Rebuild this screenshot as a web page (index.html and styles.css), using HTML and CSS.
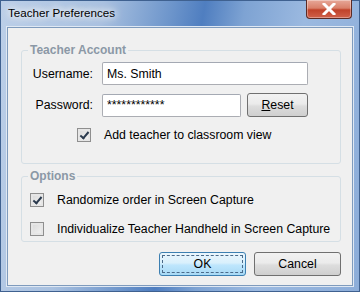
FILE: index.html
```html
<!DOCTYPE html>
<html lang="en">
<head>
  <meta charset="UTF-8">
  <title>Teacher Preferences</title>
  <link rel="stylesheet" href="styles.css">
</head>
<body>
  <div class="window">
    <div class="titlebar">
      <span class="title">Teacher Preferences</span>
      <button class="close-btn">
        <svg width="14" height="12" viewBox="0 0 14 12">
          <path d="M2 1 L12 11 M12 1 L2 11" stroke="#fff" stroke-width="3" stroke-linecap="square"/>
        </svg>
      </button>
    </div>
    <div class="content">
      <fieldset class="group account">
        <legend>Teacher Account</legend>
        <div class="row">
          <label class="field-label">Username:</label>
          <input class="text-input wide" type="text" value="Ms. Smith">
        </div>
        <div class="row">
          <label class="field-label">Password:</label>
          <input class="text-input narrow" type="text" value="************">
          <button class="btn reset-btn"><u>R</u>eset</button>
        </div>
        <div class="check-row indent">
          <span class="checkbox checked"></span>
          <span>Add teacher to classroom view</span>
        </div>
      </fieldset>

      <fieldset class="group options">
        <legend>Options</legend>
        <div class="check-row">
          <span class="checkbox checked"></span>
          <span>Randomize order in Screen Capture</span>
        </div>
        <div class="check-row">
          <span class="checkbox"></span>
          <span>Individualize Teacher Handheld in Screen Capture</span>
        </div>
      </fieldset>

      <div class="actions">
        <button class="btn ok-btn">OK</button>
        <button class="btn">Cancel</button>
      </div>
    </div>
  </div>
</body>
</html>
```

FILE: styles.css
```css
* {
  box-sizing: border-box;
  margin: 0;
  padding: 0;
}

body {
  width: 360px;
  height: 292px;
  overflow: hidden;
  font-family: "Liberation Sans", Arial, sans-serif;
  font-size: 12.3px;
  color: #000;
}

.window {
  width: 360px;
  height: 292px;
  padding: 0 6px 5px 6px;
  display: flex;
  flex-direction: column;
  border: 1px solid #3f6190;
  background: linear-gradient(100deg, #bccfe8 0%, #a9c1e0 25%, #6d95cb 42%, #4f7ec0 50%, #7ea3d3 60%, #9bb9e0 75%, #8cadd9 100%);
}

.titlebar {
  height: 26px;
  display: flex;
  align-items: flex-start;
  justify-content: space-between;
}

.title {
  margin-top: 5px;
  padding: 0 16px 0 1px;
  font-size: 11.6px;
  color: #000;
  text-shadow: 0 0 6px #fff, 0 0 10px #fff, 0 0 12px rgba(255, 255, 255, 0.8);
}

.close-btn {
  width: 46px;
  height: 19px;
  margin-top: -1px;
  margin-right: 1px;
  border: 1px solid #5b2a24;
  border-top: none;
  border-radius: 0 0 4px 4px;
  background: linear-gradient(#e7a899 0%, #d9806a 45%, #c0422a 55%, #d0614a 100%);
  display: flex;
  align-items: center;
  justify-content: center;
  box-shadow: inset 0 0 0 1px rgba(255, 255, 255, 0.35);
}

.content {
  flex: 1;
  background: #f0f0f0;
  border: 1px solid #7f9bbd;
  box-shadow: 0 0 0 1px #dfe8f3;
  padding: 15px 11px 0 13px;
}

.group {
  border: 1px solid #d5dfe5;
  border-radius: 3px;
  padding: 0 0 0 8px;
}

.group legend {
  margin-left: -2px;
  padding: 0 2px;
  font-weight: bold;
  color: #8b98a6;
  font-size: 12px;
}

.account {
  height: 121px;
  padding-top: 5px;
}

.row {
  display: flex;
  align-items: center;
  margin-bottom: 8px;
}

.field-label {
  width: 72px;
  text-align: right;
  padding-right: 9px;
}

.text-input {
  height: 23px;
  border: 1px solid #abadb3;
  border-top-color: #a4a9b3;
  border-radius: 2px;
  background: #fff;
  font-family: "Liberation Sans", Arial, sans-serif;
  font-size: 12.3px;
  padding: 0 4px;
  color: #000;
}

.wide {
  width: 206px;
}

.narrow {
  width: 139px;
}

.btn {
  height: 24px;
  border: 1px solid #707070;
  border-radius: 3px;
  background: linear-gradient(#f2f2f2 0%, #ebebeb 45%, #dddddd 55%, #cfcfcf 100%);
  font-family: "Liberation Sans", Arial, sans-serif;
  font-size: 12.3px;
  color: #000;
}

.reset-btn {
  width: 61px;
  margin-left: 6px;
}

.check-row {
  display: flex;
  align-items: center;
  height: 20px;
}

.indent {
  margin-left: 47px;
}

.checkbox {
  width: 14px;
  height: 14px;
  margin-right: 13px;
  border: 1px solid #8f8f8f;
  background: linear-gradient(135deg, #d8d8d8, #f4f4f4);
  box-shadow: inset 0 0 0 2px #e6e6e6;
  position: relative;
}

.checked::after {
  content: "";
  position: absolute;
  left: 4px;
  top: 1px;
  width: 3px;
  height: 7px;
  border: solid #2a3a4e;
  border-width: 0 2px 2px 0;
  transform: rotate(40deg);
}

.options {
  margin-top: 5px;
  height: 73px;
  padding-top: 7px;
}

.options .check-row {
  margin-bottom: 9px;
}

.actions {
  display: flex;
  justify-content: flex-end;
  gap: 8px;
  margin-top: 10px;
}

.actions .btn {
  width: 87px;
}

.ok-btn {
  border-color: #3c7fb1;
  background: linear-gradient(#eaf6fd 0%, #d9f0fc 45%, #bee6fd 55%, #a7d9f5 100%);
  outline: 1px dashed #4a6a8a;
  outline-offset: -4px;
}
```
